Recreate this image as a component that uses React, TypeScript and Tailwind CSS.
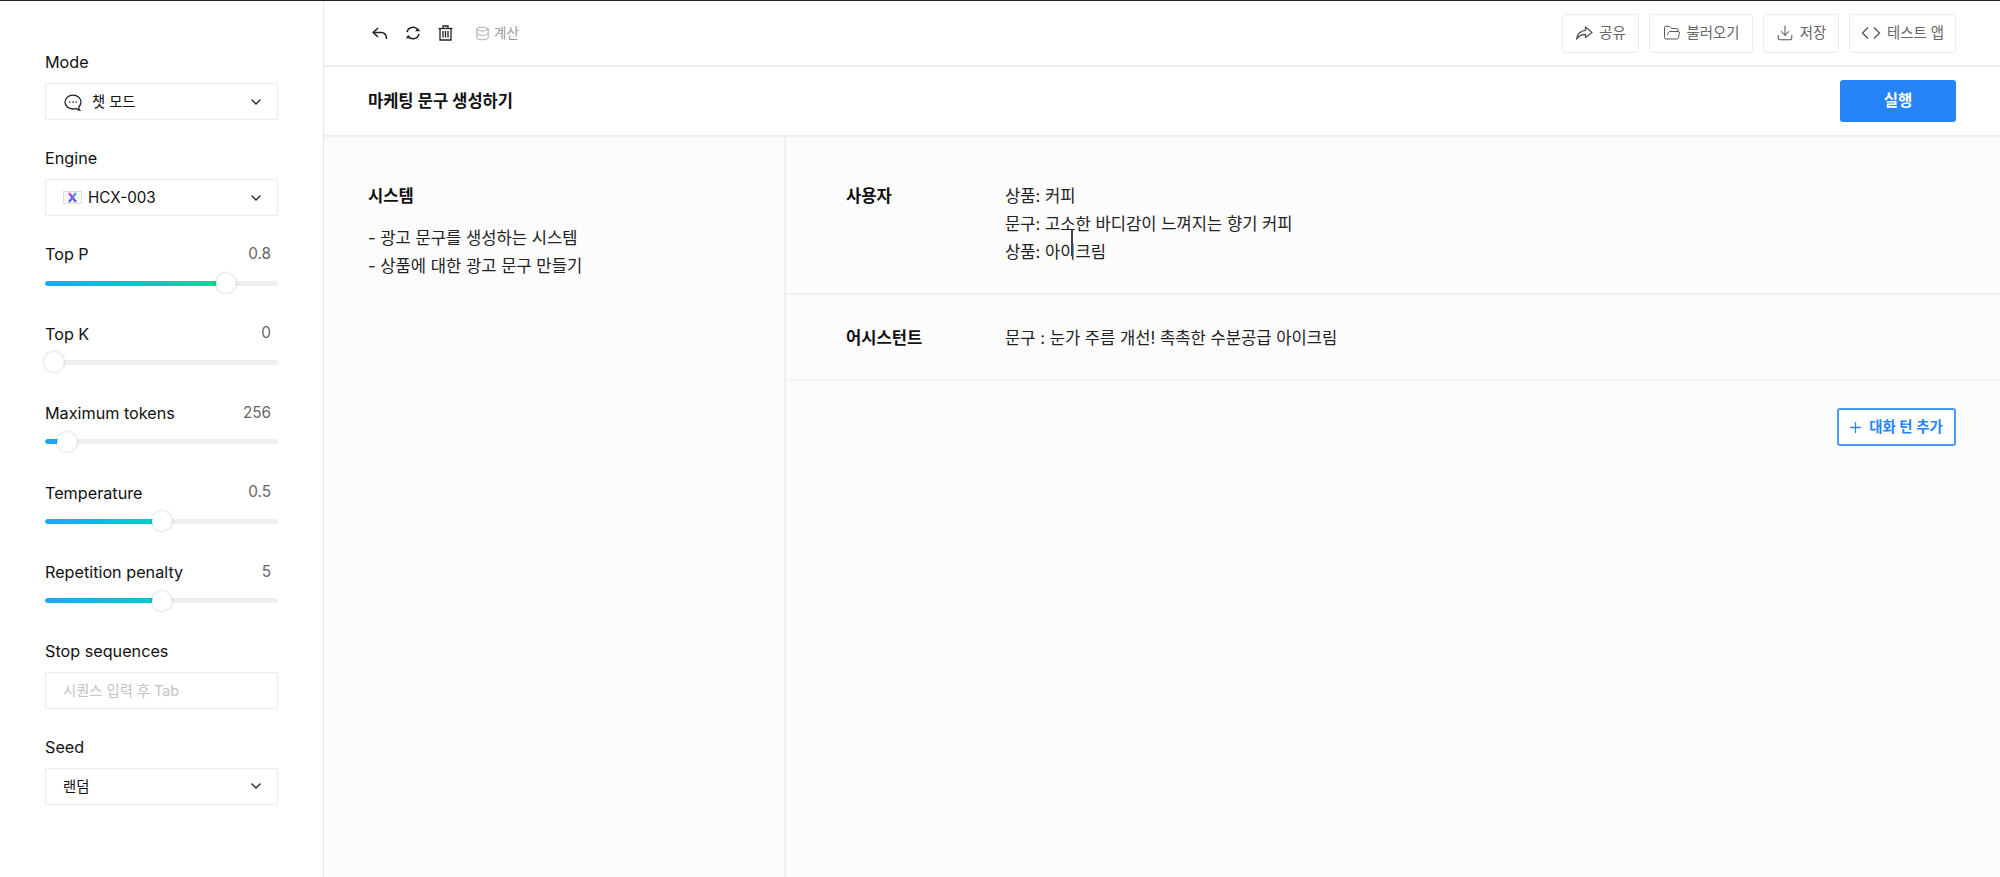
import { ChevronDown, Database, Download, FolderOpen, Plus } from "lucide-react";
import type { ReactNode } from "react";

const FONT = "font-['Inter','Noto_Sans_CJK_KR',sans-serif]";

function Field({ label, children }: { label: string; children: ReactNode }) {
  return (
    <div className="flex flex-col mb-[28px]">
      <div className="h-[20px] leading-[20px] text-[16.200px] text-[#111] mb-[11px]">{label}</div>
      {children}
    </div>
  );
}

function Select({ children }: { children: ReactNode }) {
  return (
    <div className="h-[37px] border border-[#ebebeb] rounded-[2px] bg-white flex items-center pl-[17px] pr-[13px] text-[14.300px] text-[#111]">
      <div className="flex items-center flex-1">{children}</div>
      <ChevronDown size={16} strokeWidth={2} className="text-[#222]" />
    </div>
  );
}

function Slider({ label, value, pos, to }: { label: string; value: string; pos: number; to: string }) {
  const left = pos * 216 - 1;
  return (
    <div className="flex flex-col mb-[30.400px]">
      <div className="h-[20px] pt-px flex items-center justify-between pr-[7px] text-[16.200px] text-[#111]">
        <span>{label}</span>
        <span className="text-[15.300px] text-[#666]">{value}</span>
      </div>
      <div className="relative h-[20px] mt-[9px] flex items-center">
        <div className="w-full h-[5px] rounded-full bg-[#efefef] overflow-hidden">
          <div
            className="h-full rounded-full"
            style={{ width: `${left + 10}px`, backgroundImage: `linear-gradient(90deg,#1ea7fd,${to})` }}
          />
        </div>
        {/* Thumb sits over the track */}
        <div
          className="absolute w-[20px] h-[20px] rounded-full bg-white shadow-[0_0_3px_rgba(0,0,0,0.25)]"
          style={{ left: `${left}px` }}
        />
      </div>
    </div>
  );
}

function ToolButton({ icon, label, w }: { icon: ReactNode; label: string; w: string }) {
  return (
    <div className={`${w} h-[39px] border border-[#ebebeb] rounded-[3px] bg-white flex items-center justify-center gap-[6px] text-[14.400px] text-[#666]`}>
      {icon}
      <span>{label}</span>
    </div>
  );
}

function ChatIcon() {
  return (
    <svg width="20" height="20" viewBox="0 0 20 20" fill="none" stroke="#222" strokeWidth="1.300" className="mr-[9px] mt-[3px]">
      <path d="M10 2.200c-4.500 0-8 3-8 6.900s3.500 6.900 8 6.900c1.100 0 2.200-.2 3.100-.5.900.9 2 1.500 3.600 1.700-.7-.9-1-1.900-1-3 1.400-1.300 2.300-3.100 2.300-5.100 0-3.900-3.500-6.900-8-6.900z" />
      <circle cx="6.800" cy="9.100" r=".8" fill="#222" stroke="none" />
      <circle cx="10" cy="9.100" r=".8" fill="#222" stroke="none" />
      <circle cx="13.200" cy="9.100" r=".8" fill="#222" stroke="none" />
    </svg>
  );
}

function EngineIcon() {
  return (
    <svg width="19" height="13" viewBox="0 0 19 13" className="mr-[6px]">
      <defs>
        <linearGradient id="x1" x1="0" y1="0" x2="1" y2="1">
          <stop offset="0" stopColor="#e832d0" />
          <stop offset="1" stopColor="#3a5bf0" />
        </linearGradient>
        <linearGradient id="x2" x1="1" y1="0" x2="0" y2="1">
          <stop offset="0" stopColor="#35b6f5" />
          <stop offset="1" stopColor="#7a3cf0" />
        </linearGradient>
      </defs>
      <rect x=".5" y=".5" width="18" height="12" fill="#fafafa" stroke="#dedede" />
      <path d="M6 2 13 11" stroke="url(#x1)" strokeWidth="2.200" fill="none" />
      <path d="M13 2 6 11" stroke="url(#x2)" strokeWidth="2.200" fill="none" />
    </svg>
  );
}

function UndoIcon() {
  return (
    <svg width="16" height="12" viewBox="0 0 16 12" fill="none" stroke="#222" strokeWidth="1.500">
      <path d="M6 1 1.200 5.500 6 10" />
      <path d="M1.500 5.500H9c3.500 0 5.500 2.200 5.500 6.500" />
    </svg>
  );
}

function RefreshIcon() {
  return (
    <svg width="16" height="16" viewBox="0 0 16 16" fill="none" stroke="#222" strokeWidth="1.500">
      <path d="M2 7.200A6 6 0 0 1 12.800 4.800" />
      <path d="M14 8.800A6 6 0 0 1 3.200 11.200" />
      <path d="M10.600 6.200h5L13.100 2.900z" fill="#222" stroke="none" transform="translate(-.4 0)" />
      <path d="M.8 9.800h5L3.300 13.100z" fill="#222" stroke="none" transform="rotate(180 3.300 11.500)" />
    </svg>
  );
}

function TrashIcon() {
  return (
    <svg width="15" height="16" viewBox="0 0 15 16" fill="none" stroke="#222" strokeWidth="1.300">
      <path d="M.500 3.500h14" />
      <path d="M5 3.500V1h5v2.500" />
      <path d="M2 3.500V15h11V3.500" />
      <path d="M5 6v6.500M7.500 6v6.500M10 6v6.500" />
    </svg>
  );
}

function ShareIcon() {
  return (
    <svg width="18" height="18" viewBox="0 0 18 18" fill="none" stroke="#555" strokeWidth="1.300" strokeLinejoin="round">
      <path d="M10.500 3 17 8.500 10.500 13.500V10.500C6.500 10.300 3.800 11.800 1.500 15 2.200 10 5.300 6.800 10.500 6.300V3z" />
    </svg>
  );
}

function CodeIcon() {
  return (
    <svg width="20" height="14" viewBox="0 0 20 14" fill="none" stroke="#555" strokeWidth="1.300">
      <path d="M7 1.500 1.500 7 7 12.500" />
      <path d="M13 1.500 18.500 7 13 12.500" />
    </svg>
  );
}

export default function App() {
  return (
    <div className={`${FONT} w-[2000px] h-[877px] bg-white flex flex-col overflow-hidden relative`}>
      <div className="h-px bg-[#222] shrink-0" />
      <div className="flex flex-1 min-h-0">
        <aside className="w-[324px] shrink-0 border-r border-[#e8e8e8] pl-[45px] pr-[45px] pt-[51px]">
          <Field label="Mode">
            <Select>
              <ChatIcon />
              <span>챗 모드</span>
            </Select>
          </Field>
          <Field label="Engine">
            <Select>
              <EngineIcon />
              <span className="text-[15.200px] pt-px">HCX-003</span>
            </Select>
          </Field>
          <Slider label="Top P" value="0.8" pos={0.795} to="#00e090" />
          <Slider label="Top K" value="0" pos={0} to="#1ea7fd" />
          <Slider label="Maximum tokens" value="256" pos={0.06} to="#1ea7fd" />
          <Slider label="Temperature" value="0.5" pos={0.5} to="#00cfc4" />
          <Slider label="Repetition penalty" value="5" pos={0.5} to="#00cfc4" />
          <Field label="Stop sequences">
            <div className="h-[37px] border border-[#ebebeb] rounded-[2px] bg-white flex items-center pl-[17px] pt-px text-[14.300px] text-[#c4c4c4]">
              시퀀스 입력 후 Tab
            </div>
          </Field>
          <Field label="Seed">
            <Select>
              <span>랜덤</span>
            </Select>
          </Field>
        </aside>

        <main className="flex-1 min-w-0 flex flex-col">
          <header className="h-[66px] shrink-0 border-b-2 border-[#efefef] flex items-center pl-[48px] pr-[44px]">
            <div className="flex items-center">
              <UndoIcon />
              <div className="ml-[17px]"><RefreshIcon /></div>
              <div className="ml-[17px]"><TrashIcon /></div>
              <div className="ml-[22px] flex items-center gap-[4px] text-[13.500px] text-[#999]">
                <Database size={15} strokeWidth={1.300} />
                <span>계산</span>
              </div>
            </div>
            <div className="ml-auto flex items-center gap-[10px]">
              <ToolButton w="w-[77px]" icon={<ShareIcon />} label="공유" />
              <ToolButton w="w-[104px]" icon={<FolderOpen size={18} strokeWidth={1.300} className="text-[#555]" />} label="불러오기" />
              <ToolButton w="w-[76px]" icon={<Download size={18} strokeWidth={1.400} className="text-[#555]" />} label="저장" />
              <ToolButton w="w-[107px]" icon={<CodeIcon />} label="테스트 앱" />
            </div>
          </header>

          <div className="h-[70px] shrink-0 border-b-2 border-[#efefef] flex items-center justify-between pl-[44px] pr-[44px]">
            <h1 className="text-[16.500px] font-semibold text-[#111]">마케팅 문구 생성하기</h1>
            <button className="w-[116px] h-[42px] rounded-[3px] bg-[#2684f6] text-white text-[15.500px] font-semibold">실행</button>
          </div>

          <div className="flex-1 min-h-0 flex bg-[#fcfcfc]">
            <section className="w-[462px] shrink-0 border-r-2 border-[#efefef] pl-[44px] pt-[48px]">
              <div className="text-[16.600px] font-semibold text-[#111] leading-[22px]">시스템</div>
              <div className="mt-[17px] text-[16.600px] text-[#222] leading-[28px]">
                <div>- 광고 문구를 생성하는 시스템</div>
                <div>- 상품에 대한 광고 문구 만들기</div>
              </div>
            </section>

            <section className="flex-1 min-w-0 flex flex-col">
              <div className="h-[158px] border-b-2 border-[#efefef] flex pl-[60px] pt-[45px] relative">
                <div className="w-[159px] text-[16.600px] font-semibold text-[#111] leading-[28px]">사용자</div>
                <div className="text-[16.600px] text-[#222] leading-[28px]">
                  <div>상품: 커피</div>
                  <div>문구: 고소한 바디감이 느껴지는 향기 커피</div>
                  <div>상품: 아이크림</div>
                </div>
                {/* Text cursor over the words */}
                <div className="absolute left-[285px] top-[93px] w-[2px] h-[26px] bg-[#444]" />
              </div>
              <div className="h-[85px] border-b border-[#efefef] flex pl-[60px] pt-[29px]">
                <div className="w-[159px] text-[16.600px] font-semibold text-[#111] leading-[28px]">어시스턴트</div>
                <div className="text-[16.600px] text-[#222] leading-[28px]">문구 : 눈가 주름 개선! 촉촉한 수분공급 아이크림</div>
              </div>
              <div className="flex justify-end pr-[44px] pt-[28px]">
                <button className="w-[119px] h-[38px] border-2 border-[#4b9bf8] rounded-[3px] bg-white flex items-center justify-center gap-[5px] pr-[3px] text-[14.400px] font-semibold text-[#2684f6]">
                  <Plus size={17} strokeWidth={1.800} />
                  <span>대화 턴 추가</span>
                </button>
              </div>
            </section>
          </div>
        </main>
      </div>
    </div>
  );
}
